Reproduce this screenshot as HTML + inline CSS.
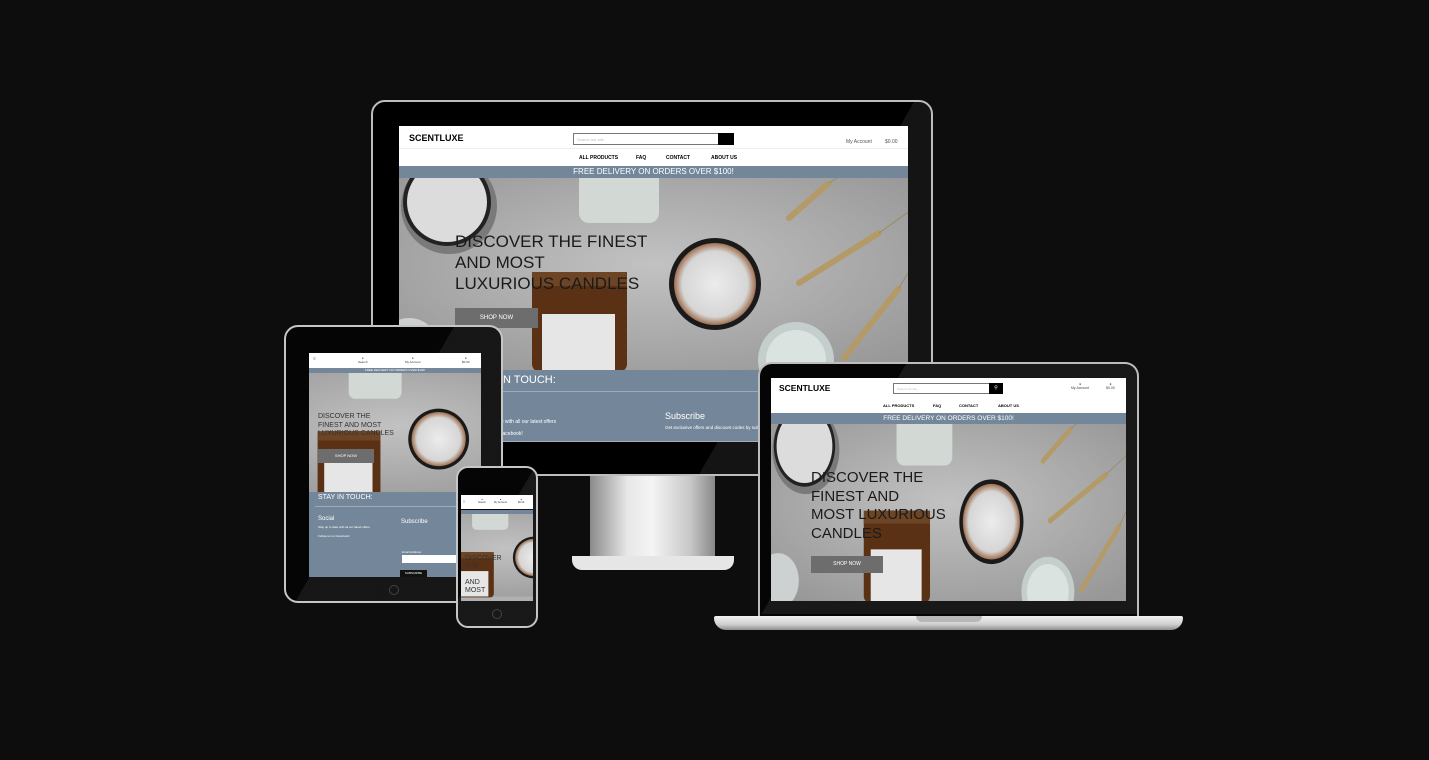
<!DOCTYPE html>
<html><head><meta charset="utf-8">
<style>
*{margin:0;padding:0;box-sizing:border-box}
body{width:1429px;height:760px;background:#0e0d0e;position:relative;overflow:hidden;font-family:"Liberation Sans",sans-serif}
.a{position:absolute}
.hero{position:absolute;overflow:hidden;background:#b0b0b0}
.hero svg{position:absolute;left:0;top:0;width:100%;height:100%}
.hdr{background:#fff;position:absolute}
.blue{background:#74879a}
.t{position:absolute;white-space:nowrap}
</style></head><body>
<svg width="0" height="0" style="position:absolute">
<defs>
<radialGradient id="bg" cx="50%" cy="45%" r="70%"><stop offset="0" stop-color="#c2c2c2"/><stop offset="1" stop-color="#979797"/></radialGradient>
<radialGradient id="wax" cx="50%" cy="50%" r="50%"><stop offset="0" stop-color="#ececec"/><stop offset=".8" stop-color="#d6d6d6"/><stop offset="1" stop-color="#a07050"/></radialGradient>
<g id="scene">
<rect width="509" height="192" fill="url(#bg)"/>
<circle cx="50" cy="28" r="48" fill="#7a7a7a"/><circle cx="48" cy="24" r="44" fill="#222"/><circle cx="48" cy="24" r="40" fill="#dcdcdc"/>
<rect x="180" y="-10" width="80" height="55" rx="10" fill="#d2d9d5"/>
<rect x="133" y="94" width="95" height="100" rx="8" fill="#5a3115"/><rect x="133" y="94" width="95" height="14" fill="#6d4525"/>
<rect x="143" y="136" width="73" height="56" fill="#e6e6e6"/>
<circle cx="316" cy="106" r="46" fill="#1a1a1a"/><circle cx="316" cy="106" r="41" fill="url(#wax)"/>
<circle cx="397" cy="182" r="38" fill="#c4cecc"/><circle cx="397" cy="182" r="30" fill="#dbe3e1"/>
<circle cx="10" cy="170" r="30" fill="#cdd1d1"/>
<g stroke="#b39a66" stroke-width="6" stroke-linecap="round" stroke-dasharray="4 2">
<line x1="390" y1="40" x2="430" y2="5"/><line x1="400" y1="105" x2="480" y2="55"/><line x1="445" y1="180" x2="500" y2="110"/></g>
<g stroke="#9a8a66" stroke-width="1"><line x1="430" y1="5" x2="470" y2="-20"/><line x1="480" y1="55" x2="515" y2="30"/><line x1="500" y1="110" x2="515" y2="85"/></g>
</g></defs></svg>

<!-- MONITOR -->
<div class="a" style="left:590px;top:470px;width:125px;height:100px;background:linear-gradient(90deg,#8a8a8a,#e8e8e8 30%,#f4f4f4 50%,#c8c8c8 80%,#888);border-radius:0 0 8px 8px"></div>
<div class="a" style="left:572px;top:556px;width:162px;height:14px;background:#e6e6e6;border-radius:0 0 10px 10px"></div>
<div class="a" style="left:371px;top:100px;width:562px;height:376px;background:#000;border:2px solid #bdbdbd;border-radius:14px"></div>
<div class="a" style="left:373px;top:102px;width:558px;height:372px;border-radius:12px;background:linear-gradient(120deg,transparent 70%,rgba(255,255,255,.08) 70%)"></div>
<div class="hdr" style="left:399px;top:126px;width:509px;height:40px"></div>
<div class="t" style="left:409px;top:133px;font-size:9px;font-weight:bold">SCENTLUXE</div>
<div class="a" style="left:573px;top:133px;width:146px;height:12px;border:1px solid #777;font-size:4px;color:#bbb;padding:3px">Search our site</div>
<div class="a" style="left:718px;top:133px;width:16px;height:12px;background:#000"></div>
<div class="t" style="left:846px;top:139px;font-size:5px;color:#555">My Account</div>
<div class="t" style="left:885px;top:139px;font-size:5px;color:#555">$0.00</div>
<div class="a" style="left:399px;top:148px;width:509px;height:1px;background:#eee"></div>
<div class="t" style="left:579px;top:155px;font-size:5px;font-weight:bold">ALL PRODUCTS</div>
<div class="t" style="left:636px;top:155px;font-size:5px;font-weight:bold">FAQ</div>
<div class="t" style="left:666px;top:155px;font-size:5px;font-weight:bold">CONTACT</div>
<div class="t" style="left:711px;top:155px;font-size:5px;font-weight:bold">ABOUT US</div>
<div class="a blue" style="left:399px;top:166px;width:509px;height:12px;color:#fff;font-size:8px;text-align:center;line-height:12px">FREE DELIVERY ON ORDERS OVER $100!</div>
<div class="hero" style="left:399px;top:178px;width:509px;height:192px"><svg viewBox="0 0 509 192" preserveAspectRatio="xMidYMid slice"><use href="#scene"/></svg></div>
<div class="t" style="left:455px;top:231px;font-size:17px;line-height:21px;color:#1a1a1a">DISCOVER THE FINEST<br>AND MOST<br>LUXURIOUS CANDLES</div>
<div class="a" style="left:455px;top:308px;width:83px;height:20px;background:#6d6d6d;color:#fff;font-size:6px;text-align:center;line-height:20px">SHOP NOW</div>
<div class="a blue" style="left:399px;top:370px;width:509px;height:72px"></div>
<div class="a" style="left:399px;top:391px;width:509px;height:1px;background:#9aabbb"></div>
<div class="a" style="left:399px;top:441px;width:509px;height:1px;background:#aab"></div>
<div class="t" style="left:470px;top:374px;font-size:11px;color:#fff">STAY IN TOUCH:</div>
<div class="t" style="left:470px;top:419px;font-size:5px;color:#fff">Stay up to date with all our latest offers</div>
<div class="t" style="left:470px;top:431px;font-size:5px;color:#fff">Follow us on Facebook!</div>
<div class="t" style="left:665px;top:411px;font-size:9px;color:#fff">Subscribe</div>
<div class="t" style="left:665px;top:425px;font-size:4.5px;color:#fff">Get exclusive offers and discount codes by subscribing</div>

<!-- TABLET -->
<div class="a" style="left:284px;top:325px;width:219px;height:278px;background:#050505;border:2px solid #c6c6c6;border-radius:14px"></div>
<div class="a" style="left:286px;top:327px;width:215px;height:274px;border-radius:12px;background:linear-gradient(120deg,transparent 45%,rgba(255,255,255,.07) 45%)"></div>
<div class="a" style="left:389px;top:585px;width:10px;height:10px;border:1px solid #444;border-radius:50%"></div>
<div class="hdr" style="left:309px;top:353px;width:172px;height:15px"></div>
<div class="t" style="left:313px;top:356px;font-size:5px;color:#888">≡</div>
<div class="t" style="left:358px;top:356px;font-size:3px;color:#333;text-align:center">●<br>Search</div>
<div class="t" style="left:405px;top:356px;font-size:3px;color:#333;text-align:center">●<br>My Account</div>
<div class="t" style="left:462px;top:356px;font-size:3px;color:#333;text-align:center">●<br>$0.00</div>
<div class="a blue" style="left:309px;top:368px;width:172px;height:5px;color:#fff;font-size:3px;text-align:center;line-height:5px">FREE DELIVERY ON ORDERS OVER $100!</div>
<div class="hero" style="left:309px;top:373px;width:172px;height:119px"><svg viewBox="120 0 260 192" preserveAspectRatio="xMidYMid slice"><use href="#scene"/></svg></div>
<div class="t" style="left:318px;top:413px;font-size:7px;line-height:8.5px;color:#333">DISCOVER THE<br>FINEST AND MOST<br>LUXURIOUS CANDLES</div>
<div class="a" style="left:318px;top:449px;width:56px;height:14px;background:#6d6d6d;color:#fff;font-size:4px;text-align:center;line-height:14px">SHOP NOW</div>
<div class="a blue" style="left:309px;top:492px;width:172px;height:85px"></div>
<div class="a" style="left:315px;top:506px;width:166px;height:1px;background:#9aabbb"></div>
<div class="t" style="left:318px;top:494px;font-size:7px;color:#fff">STAY IN TOUCH:</div>
<div class="t" style="left:318px;top:516px;font-size:6px;color:#fff">Social</div>
<div class="t" style="left:318px;top:525px;font-size:3px;color:#fff">Stay up to date with all our latest offers</div>
<div class="t" style="left:318px;top:534px;font-size:3px;color:#fff">Follow us on Facebook!</div>
<div class="t" style="left:401px;top:519px;font-size:6px;color:#fff">Subscribe</div>
<div class="t" style="left:402px;top:550px;font-size:3px;color:#fff">Email Address</div>
<div class="a" style="left:402px;top:555px;width:60px;height:8px;background:#fff"></div>
<div class="a" style="left:400px;top:570px;width:27px;height:7px;background:#111;color:#fff;font-size:3px;text-align:center;line-height:7px">SUBSCRIBE</div>

<!-- LAPTOP -->
<div class="a" style="left:758px;top:362px;width:381px;height:254px;background:#050505;border:2px solid #bdbdbd;border-bottom:none;border-radius:14px 14px 0 0"></div>
<div class="a" style="left:760px;top:364px;width:377px;height:250px;border-radius:12px 12px 0 0;background:linear-gradient(120deg,transparent 28%,rgba(255,255,255,.08) 28%)"></div>
<div class="a" style="left:714px;top:616px;width:469px;height:14px;background:linear-gradient(#f2f2f2,#cfcfcf 60%,#8f8f8f);border-radius:2px 2px 12px 12px"></div>
<div class="a" style="left:916px;top:616px;width:66px;height:6px;background:#b8b8b8;border-radius:0 0 6px 6px"></div>
<div class="hdr" style="left:771px;top:378px;width:355px;height:35px"></div>
<div class="t" style="left:779px;top:383px;font-size:8.5px;font-weight:bold">SCENTLUXE</div>
<div class="a" style="left:893px;top:383px;width:97px;height:11px;border:1px solid #777;font-size:3px;color:#bbb;padding:3px">Search our site</div>
<div class="a" style="left:989px;top:383px;width:14px;height:11px;background:#000;color:#fff;font-size:5px;text-align:center;line-height:11px">⚲</div>
<div class="t" style="left:1071px;top:382px;font-size:3.5px;color:#444;text-align:center">●<br>My Account</div>
<div class="t" style="left:1106px;top:382px;font-size:3.5px;color:#444;text-align:center">●<br>$0.00</div>
<div class="t" style="left:883px;top:403px;font-size:4px;font-weight:bold">ALL PRODUCTS</div>
<div class="t" style="left:933px;top:403px;font-size:4px;font-weight:bold">FAQ</div>
<div class="t" style="left:959px;top:403px;font-size:4px;font-weight:bold">CONTACT</div>
<div class="t" style="left:998px;top:403px;font-size:4px;font-weight:bold">ABOUT US</div>
<div class="a blue" style="left:771px;top:413px;width:355px;height:11px;color:#fff;font-size:6.5px;text-align:center;line-height:11px">FREE DELIVERY ON ORDERS OVER $100!</div>
<div class="hero" style="left:771px;top:424px;width:355px;height:177px"><svg viewBox="0 0 509 192" preserveAspectRatio="none"><use href="#scene"/></svg></div>
<div class="t" style="left:811px;top:469px;font-size:15px;line-height:18.5px;color:#1a1a1a">DISCOVER THE<br>FINEST AND<br>MOST LUXURIOUS<br>CANDLES</div>
<div class="a" style="left:811px;top:556px;width:72px;height:17px;background:#6d6d6d;color:#fff;font-size:5px;text-align:center;line-height:17px">SHOP NOW</div>

<!-- PHONE -->
<div class="a" style="left:456px;top:466px;width:82px;height:162px;background:#050505;border:2px solid #c6c6c6;border-radius:12px"></div>
<div class="a" style="left:458px;top:468px;width:78px;height:158px;border-radius:10px;background:linear-gradient(120deg,transparent 45%,rgba(255,255,255,.08) 45%)"></div>
<div class="a" style="left:492px;top:609px;width:10px;height:10px;border:1px solid #444;border-radius:50%"></div>
<div class="hdr" style="left:461px;top:495px;width:72px;height:14px"></div>
<div class="t" style="left:463px;top:499px;font-size:4px;color:#888">≡</div>
<div class="t" style="left:478px;top:498px;font-size:2.5px;color:#333;text-align:center">●<br>Search</div>
<div class="t" style="left:494px;top:498px;font-size:2.5px;color:#333;text-align:center">●<br>My Account</div>
<div class="t" style="left:518px;top:498px;font-size:2.5px;color:#333;text-align:center">●<br>$0.00</div>
<div class="a blue" style="left:461px;top:510px;width:72px;height:4px"></div>
<div class="hero" style="left:461px;top:514px;width:72px;height:87px"><svg viewBox="120 10 230 192" preserveAspectRatio="xMidYMid slice"><use href="#scene"/></svg></div>
<div class="t" style="left:465px;top:555px;font-size:7px;line-height:8px;color:#333">DISCOVER<br>THE<br><br>AND<br>MOST</div>
</body></html>
